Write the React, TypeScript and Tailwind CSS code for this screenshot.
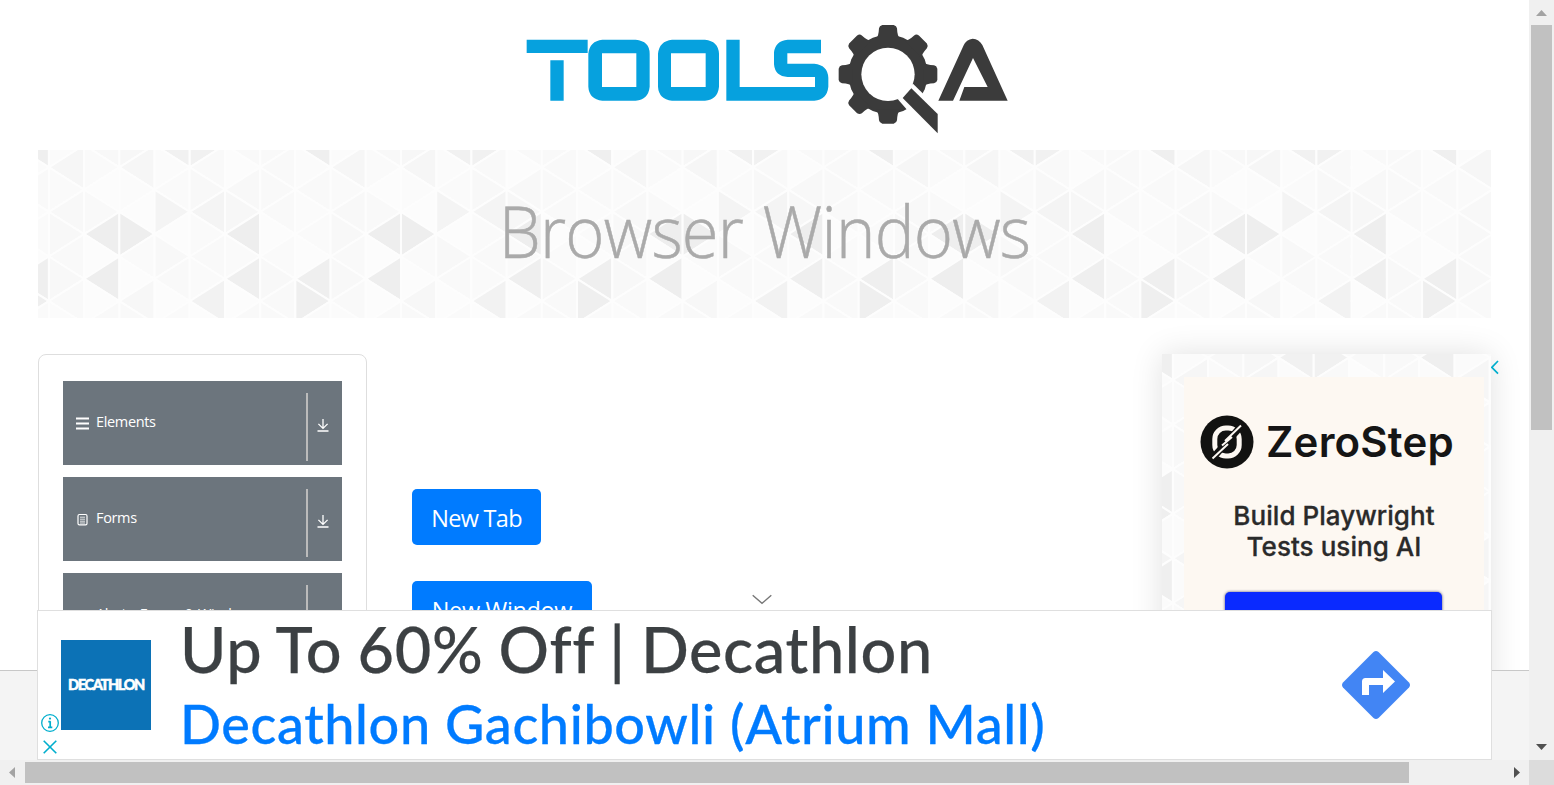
import type { ReactNode } from 'react';

const COL = 35.21;
const ROW = 22.3;

// Grey level of each triangle: one list per column strip, ordered from top to bottom.
const SHADES: string[][] = [
  ['fb', 'f6', 'fa', 'f8', 'f8', 'f9', 'f8', 'f9', 'fb', 'f5'],
  ['f8', 'fa', 'fc', 'f9', 'ee', 'fc', 'ee', 'fc', 'f9', 'fb'],
  ['f7', 'f6', 'fb', 'fc', 'ee', 'fa', 'fc', 'f7', 'f9', 'fc'],
  ['f1', 'fb', 'fa', 'f4', 'fc', 'f8', 'f9', 'fc', 'fa', 'f7'],
  ['f1', 'f9', 'f8', 'f4', 'fa', 'f9', 'fa', 'f2', 'fc', 'f6'],
  ['f9', 'fc', 'f8', 'f7', 'ee', 'fa', 'ef', 'fc', 'f9', 'fa'],
  ['f9', 'f9', 'f9', 'f9', 'fc', 'fa', 'f8', 'f9', 'f9', 'fb'],
  ['ef', 'fb', 'f9', 'fb', 'fa', 'fc', 'ef', 'ef', 'fa', 'f4'],
];

function TrianglePattern({ width, height, top }: { width: number; height: number; top: number }) {
  const shapes: ReactNode[] = [];
  const columns = Math.ceil(width / COL);
  const rows = Math.ceil(height / ROW) + 1;
  for (let k = -1; k < columns; k++) {
    for (let r = -1; r < rows; r++) {
      const x0 = 10.9 + k * COL;
      const x1 = x0 + COL;
      const y = top + r * ROW;
      const left = (k + r) % 2 === 0;
      const apex = left ? x0 : x1;
      const base = left ? x1 : x0;
      const shade = SHADES[(k + 8) % 8][(r + 1) % 10];
      shapes.push(
        <path
          key={`${k}:${r}`}
          d={`M${apex} ${y}L${base} ${y - ROW}V${y + ROW}Z`}
          fill={`#${shade}${shade}${shade}`}
          stroke="#fdfdfd"
          strokeWidth="2"
          strokeLinejoin="round"
        />,
      );
    }
  }
  return (
    <svg className="absolute inset-0 h-full w-full bg-[#fafafa]" aria-hidden="true">
      {shapes}
    </svg>
  );
}

function Logo() {
  return (
    <svg width="520" height="130" viewBox="0 0 1560 390" className="block">
      <g fill="#06a1de">
        <path d="M35 74H218V114H35ZM106 136H146V257H106Z" />
        <path fillRule="evenodd" d="M262 74H362Q404 78 404 116V215Q400 254 362 257H262Q222 252 220 215V116Q224 78 262 74ZM261 115V216H364V115Z" />
        <path fillRule="evenodd" d="M471 74H570Q610 78 612 116V215Q608 254 570 257H471Q431 252 429 215V116Q433 78 471 74ZM468 115V216H572V115Z" />
        <path d="M634 74H674V216H900V186H818Q780 184 777 148V112Q781 77 818 74H918V115H817V146H898Q938 150 940 188V215Q936 254 898 257H634Z" />
      </g>
      <g transform="translate(750 0)">
        <g fill="#3b3b3b">
          <circle cx="369" cy="178" r="119" />
          {[0, 45, 90, 180, 225, 270, 315].map((angle) => (
            <path
              key={angle}
              transform={`rotate(${angle} 369 178)`}
              d="M333 72Q341 64 342 40Q343 32 352 30H386Q395 32 396 40Q397 64 405 72Z"
            />
          ))}
        </g>
        <circle cx="369" cy="178" r="80" fill="#fff" />
        <path d="M444 206L476 238L520 285V370L426 284L398 252L420 228Z" fill="#fff" />
        <g fill="#3b3b3b">
          <path d="M439 220L518 297V355L413 249Z" />
          <path d="M520 257L596 91Q604 73 623 71Q642 72 652 90L728 257H583L598 216H668L624 129L564 257Z" />
        </g>
      </g>
    </svg>
  );
}

function DownloadIcon() {
  return (
    <svg width="12" height="13" viewBox="0 0 12 13" fill="none" stroke="#fff" strokeWidth="1.3">
      <path d="M6 0V9.3M1.4 4.9L6 9.4L10.6 4.9M.5 12H11.5" />
    </svg>
  );
}

function MenuIcon() {
  return (
    <svg width="13" height="14" viewBox="0 0 13 14" stroke="#fff" strokeWidth="2">
      <path d="M0 1.5H13M0 6.5H13M0 11.5H13" />
    </svg>
  );
}

function FormIcon() {
  return (
    <svg width="13" height="14" viewBox="0 0 13 14" fill="none" stroke="#fff">
      <rect x="2" y="1.5" width="9" height="10.4" rx="1.4" strokeWidth="1.2" />
      <path d="M4 4.2H9M4 6.2H9M4 8.2H9M4 10H9" strokeWidth=".8" />
    </svg>
  );
}

function SideItem({ label, icon }: { label: string; icon?: ReactNode }) {
  return (
    <div className="flex h-[84px] shrink-0 bg-[#6c757d] text-white">
      <div className="flex flex-1 items-center pl-[13px]">
        <span className="mt-px w-[13px]">{icon}</span>
        <span className="mb-[2px] ml-[7px] whitespace-nowrap text-[14.5px] tracking-[-0.35px]">{label}</span>
      </div>
      <div className="mt-3 mb-1 flex w-9 items-center border-l-2 border-[#bbb] pb-[3px] pl-[8.5px]">
        <DownloadIcon />
      </div>
    </div>
  );
}

function SkyAd() {
  return (
    <aside className="relative h-[700px] w-[329px] shrink-0 shadow-[0_0_30px_rgba(0,0,0,0.12)]">
      <TrianglePattern width={329} height={700} top={26} />
      <div className="relative ml-[22px] mt-[23px] h-[600px] w-[300px] bg-[#fdf8f2] pt-[38px] font-['Inter',sans-serif]">
        <div className="flex items-center pl-4">
          <svg width="54" height="54" viewBox="0 0 54 54">
            <circle cx="27" cy="27" r="26.5" fill="#121211" />
            <rect x="14.8" y="13" width="24.4" height="28" rx="11" fill="none" stroke="#fdf8f2" strokeWidth="5" />
            <path d="M11 45L43 9" stroke="#121211" strokeWidth="7" />
            <path d="M12.5 43.5L28 29M25 26L41 10.5M22 30.5L32 22" stroke="#fdf8f2" strokeWidth="2" />
          </svg>
          <span className="ml-3 text-[42px] font-semibold leading-[54px] tracking-[0.2px] text-[#151515]">ZeroStep</span>
        </div>
        <div className="mt-[31px] text-center text-[26px] font-medium leading-[31px] tracking-[0.05px] text-[#2a2a2a] [-webkit-text-stroke:0.3px_#2a2a2a]">
          Build Playwright
          <br />
          Tests using AI
        </div>
        <div className="ml-[41px] mt-[30px] h-14 w-[217px] rounded-[5px] bg-[#0a2aff] shadow-[0_0_3px_rgba(0,0,60,0.7)]" />
      </div>
      <svg className="absolute left-[329px] top-[6px]" width="8" height="15" viewBox="0 0 8 15" fill="none" stroke="#00aecd" strokeWidth="1.7">
        <path d="M7 1L.8 7.3L7 13.6" />
      </svg>
    </aside>
  );
}

function BannerAd() {
  return (
    <section className="absolute bottom-0 left-[37px] flex h-[150px] w-[1455px] border border-[#dfdfdf] bg-white">
      <div className="flex w-[23px] flex-col items-center justify-end pb-[5px]">
        <svg width="18" height="18" viewBox="0 0 18 18" fill="none" stroke="#00aecd">
          <circle cx="9" cy="9" r="8.3" strokeWidth="1.3" />
          <path d="M9.2 7.2V14M7.3 7.7H9.5M7 13.4H11.3" strokeWidth="1.7" />
          <circle cx="9" cy="4.6" r="1.1" fill="#00aecd" stroke="none" />
        </svg>
        <svg className="mt-2" width="14" height="14" viewBox="0 0 14 14" stroke="#00aecd" strokeWidth="1.6">
          <path d="M.7 .7L13.3 13.3M13.3 .7L.7 13.3" />
        </svg>
      </div>
      <div className="mt-[29px] flex h-[90px] w-[90px] items-center justify-center bg-[#0c72b6] text-white">
        <span className="font-['Lato',sans-serif] text-[14.5px] font-black tracking-[-1.35px] [-webkit-text-stroke:0.5px_#fff]">DECATHLON</span>
      </div>
      <div className="ml-[29px] flex-1 whitespace-nowrap font-['Lato',sans-serif] font-medium">
        <div className="mt-px h-[74px] text-[63px] leading-[74px] tracking-[0.65px] text-[#3c4043] [-webkit-text-stroke:0.25px_#3c4043] [word-spacing:-1.4px]">Up To 60% Off | Decathlon</div>
        <div className="h-[72px] text-[54px] leading-[76px] tracking-[0.6px] text-[#007bff] [-webkit-text-stroke:0.3px_#007bff]">Decathlon Gachibowli (Atrium Mall)</div>
      </div>
      <svg className="mr-[80px] mt-[39px]" width="70" height="70" viewBox="0 0 70 70">
        <path d="M32.5 2Q35 0 37.5 2L68 32.5Q70 35 68 37.5L37.5 68Q35 70 32.5 68L2 37.5Q0 35 2 32.5Z" fill="#4285f4" />
        <path d="M21 45V31.5Q21 28 24.5 28H42V20L54 31.5L42 43V35H28V45Z" fill="#fff" />
      </svg>
    </section>
  );
}

export default function App() {
  return (
    <div className="grid h-[785px] w-[1554px] grid-cols-[1529px_25px] grid-rows-[760px_25px] overflow-hidden bg-white font-['Open_Sans','Noto_Sans',sans-serif]">
      <div className="relative overflow-hidden">
        <div className="h-[671px] overflow-hidden border-b border-[#c8c8c8]">
          <header className="flex h-[150px] pl-[515px] pt-[15px]">
            <Logo />
          </header>
          <div className="relative mx-[38px] flex h-[168px] items-center justify-center pb-[6px]">
            <TrianglePattern width={1453} height={168} top={17.3} />
            <h1 className="relative scale-x-[0.937] whitespace-nowrap text-[71.5px] font-light leading-none tracking-[-0.85px] text-[#aaa] [-webkit-text-stroke:0.5px_#aaa] [word-spacing:3px]">Browser Windows</h1>
          </div>
          <main className="mt-9 flex pl-[38px]">
            <nav className="flex h-[700px] w-[329px] shrink-0 flex-col gap-3 rounded-lg border border-[#dedede] px-6 pt-[26px]">
              <SideItem label="Elements" icon={<MenuIcon />} />
              <SideItem label="Forms" icon={<FormIcon />} />
              <SideItem label="Alerts, Frame & Windows" />
            </nav>
            <div className="ml-[45px] flex flex-1 flex-col items-start gap-9 pt-[135px] text-[23.5px] text-white">
              <button className="flex h-14 w-[129px] items-center justify-center whitespace-nowrap rounded-[5px] bg-[#007bff] pt-1 tracking-[-0.7px]">New Tab</button>
              <button className="flex h-14 w-[180px] items-center justify-center whitespace-nowrap rounded-[5px] bg-[#007bff] pt-1 tracking-[-0.35px]">New Window</button>
            </div>
            <SkyAd />
            <div className="w-[38px] shrink-0" />
          </main>
        </div>
        <div className="h-[89px] bg-[#f4f4f4]" />
        <svg className="absolute left-[752px] top-[594px]" width="20" height="11" viewBox="0 0 20 11" fill="none" stroke="#777" strokeWidth="1.4">
          <path d="M.7 1.2L10 9.4L19.3 1.2" />
        </svg>
        <BannerAd />
      </div>
      <div className="flex flex-col items-center bg-[#f0f0f0]">
        <svg width="25" height="25"><path d="M7 16H18L12.5 10Z" fill="#a3a3a3" /></svg>
        <div className="h-[405px] w-[21px] bg-[#c1c1c1]" />
        <div className="flex-1" />
        <svg width="25" height="25"><path d="M7 9H18L12.5 15Z" fill="#505050" /></svg>
      </div>
      <div className="flex items-center bg-[#f0f0f0]">
        <svg width="25" height="25"><path d="M15 7V18L9 12.5Z" fill="#a3a3a3" /></svg>
        <div className="h-[21px] w-[1384px] bg-[#c1c1c1]" />
        <div className="flex-1" />
        <svg width="25" height="25"><path d="M10 7V18L16 12.5Z" fill="#505050" /></svg>
      </div>
      <div className="bg-[#dcdcdc]" />
    </div>
  );
}
